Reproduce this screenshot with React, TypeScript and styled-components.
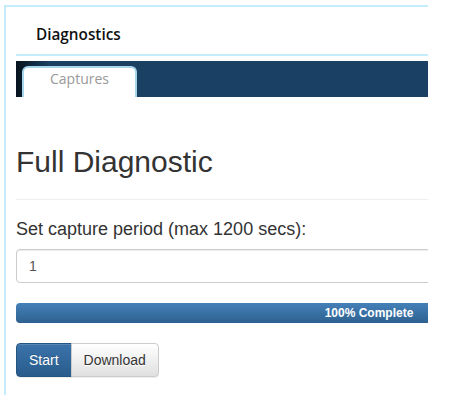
import React from "react";
import styled, { createGlobalStyle } from "styled-components";

const Global = createGlobalStyle`
  html, body { margin: 0; padding: 0; background: #fff; }
  body { font-family: "Liberation Sans", Arial, sans-serif; color: #333; }
  * { box-sizing: border-box; }
`;

const Frame = styled.div`
  margin: 5px 0 0 4px;
  width: 424px;
  height: 390px;
  border-top: 2px solid #c4ecfb;
  border-left: 2px solid #c4ecfb;
  overflow: hidden;
`;

const Inner = styled.div`
  width: 716px;
  margin-left: 10px;
`;

const Header = styled.div`
  height: 49px;
  border-bottom: 2px solid #c4ecfb;
  padding: 17px 0 0 20px;
  font-family: "Open Sans", sans-serif;
  font-weight: 600;
  font-size: 15.3px;
  color: #111;
  line-height: 20px;
`;

const TabBar = styled.div`
  margin-top: 5px;
  height: 36px;
  background: linear-gradient(to right, #07131d 0px, #1a4162 34px, #1a4164 100%);
  display: flex;
  align-items: flex-end;
  padding-left: 6px;
`;

const Tab = styled.div`
  width: 115px;
  height: 31px;
  background: #fff;
  border: 2px solid #a7d6ec;
  border-bottom: none;
  border-radius: 6px 6px 0 0;
  font-family: "Open Sans", sans-serif;
  font-size: 14px;
  color: #999;
  text-align: center;
  line-height: 22px;
`;

const Content = styled.div`
  padding-top: 48px;
  width: 706px;
`;

const Title = styled.h2`
  margin: 0;
  font-size: 30px;
  font-weight: 400;
  line-height: 33px;
  color: #333;
  padding-bottom: 21px;
  border-bottom: 1px solid #eee;
`;

const Label = styled.label`
  display: block;
  margin-top: 18px;
  font-size: 18px;
  line-height: 22px;
  color: #333;
`;

const Input = styled.div`
  margin-top: 9px;
  height: 34px;
  border: 1px solid #ccc;
  border-radius: 4px;
  box-shadow: inset 0 1px 1px rgba(0, 0, 0, 0.075);
  padding: 6px 12px;
  font-size: 14px;
  line-height: 20px;
  color: #555;
`;

const Progress = styled.div`
  margin-top: 20px;
  height: 20px;
  border-radius: 4px;
  overflow: hidden;
  background: #ebebeb;
`;

const ProgressFill = styled.div`
  height: 100%;
  background: linear-gradient(to bottom, #4480b8 0, #2e6191 100%);
  color: #fff;
  font-size: 12px;
  font-weight: 700;
  line-height: 20px;
  text-align: center;
`;

const ButtonGroup = styled.div`
  margin-top: 20px;
  display: flex;
`;

const Button = styled.button<{ $primary?: boolean }>`
  height: 34px;
  padding: 6px 12px;
  font-family: "Liberation Sans", Arial, sans-serif;
  font-size: 14px;
  line-height: 20px;
  border: 1px solid ${(p) => (p.$primary ? "#245580" : "#ccc")};
  background: ${(p) =>
    p.$primary
      ? "linear-gradient(to bottom, #3b73ab 0, #295c8c 100%)"
      : "linear-gradient(to bottom, #fff 0, #e0e0e0 100%)"};
  color: ${(p) => (p.$primary ? "#fff" : "#333")};
  text-shadow: ${(p) => (p.$primary ? "0 -1px 0 rgba(0,0,0,.2)" : "0 1px 0 #fff")};
  box-shadow: inset 0 1px 0 rgba(255, 255, 255, 0.15), 0 1px 1px rgba(0, 0, 0, 0.075);
  border-radius: ${(p) => (p.$primary ? "4px 0 0 4px" : "0 4px 4px 0")};
  margin-left: ${(p) => (p.$primary ? "0" : "-1px")};
`;

export default function App() {
  return (
    <>
      <Global />
      <Frame>
        <Inner>
          <Header>Diagnostics</Header>
          <TabBar>
            <Tab>Captures</Tab>
          </TabBar>
          <Content>
            <Title>Full Diagnostic</Title>
            <Label>Set capture period (max 1200 secs):</Label>
            <Input>1</Input>
            <Progress>
              <ProgressFill style={{ width: "100%" }}>100% Complete</ProgressFill>
            </Progress>
            <ButtonGroup>
              <Button $primary>Start</Button>
              <Button>Download</Button>
            </ButtonGroup>
          </Content>
        </Inner>
      </Frame>
    </>
  );
}
